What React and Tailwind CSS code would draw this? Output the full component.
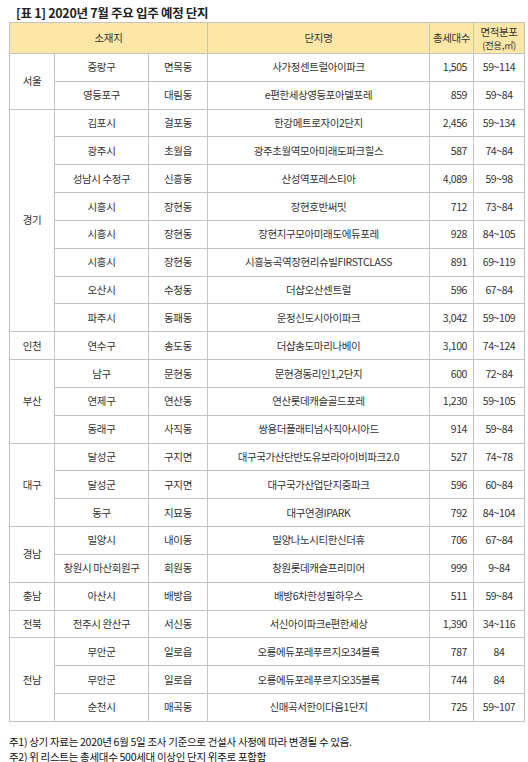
const groups = [
  {
    region: "서울",
    rows: [
      ["중랑구", "면목동", "사가정센트럴아이파크", "1,505", "59~114"],
      ["영등포구", "대림동", "e편한세상영등포아델포레", "859", "59~84"],
    ],
  },
  {
    region: "경기",
    rows: [
      ["김포시", "걸포동", "한강메트로자이2단지", "2,456", "59~134"],
      ["광주시", "초월읍", "광주초월역모아미래도파크힐스", "587", "74~84"],
      ["성남시 수정구", "신흥동", "산성역포레스티아", "4,089", "59~98"],
      ["시흥시", "장현동", "장현호반써밋", "712", "73~84"],
      ["시흥시", "장현동", "장현지구모아미래도에듀포레", "928", "84~105"],
      ["시흥시", "장현동", "시흥능곡역장현리슈빌FIRSTCLASS", "891", "69~119"],
      ["오산시", "수청동", "더샵오산센트럴", "596", "67~84"],
      ["파주시", "동패동", "운정신도시아이파크", "3,042", "59~109"],
    ],
  },
  {
    region: "인천",
    rows: [["연수구", "송도동", "더샵송도마리나베이", "3,100", "74~124"]],
  },
  {
    region: "부산",
    rows: [
      ["남구", "문현동", "문현경동리인1,2단지", "600", "72~84"],
      ["연제구", "연산동", "연산롯데캐슬골드포레", "1,230", "59~105"],
      ["동래구", "사직동", "쌍용더플래티넘사직아시아드", "914", "59~84"],
    ],
  },
  {
    region: "대구",
    rows: [
      ["달성군", "구지면", "대구국가산단반도유보라아이비파크2.0", "527", "74~78"],
      ["달성군", "구지면", "대구국가산업단지중파크", "596", "60~84"],
      ["동구", "지묘동", "대구연경IPARK", "792", "84~104"],
    ],
  },
  {
    region: "경남",
    rows: [
      ["밀양시", "내이동", "밀양나노시티한신더휴", "706", "67~84"],
      ["창원시 마산회원구", "회원동", "창원롯데캐슬프리미어", "999", "9~84"],
    ],
  },
  {
    region: "충남",
    rows: [["아산시", "배방읍", "배방6차한성필하우스", "511", "59~84"]],
  },
  {
    region: "전북",
    rows: [["전주시 완산구", "서신동", "서신아이파크e편한세상", "1,390", "34~116"]],
  },
  {
    region: "전남",
    rows: [
      ["무안군", "일로읍", "오룡에듀포레푸르지오34블록", "787", "84"],
      ["무안군", "일로읍", "오룡에듀포레푸르지오35블록", "744", "84"],
      ["순천시", "매곡동", "신매곡서한이다음1단지", "725", "59~107"],
    ],
  },
];

const cell = "border border-[#c3c3c3] text-center align-middle";

export default function App() {
  return (
    <div
      className="w-[528px] h-[762px] overflow-hidden bg-white text-[#333] pt-[6px]"
      style={{ fontFamily: '"Noto Sans CJK KR", "Noto Sans", sans-serif' }}
    >
      <h1 className="pl-[16px] text-[12.5px] font-bold leading-[14px] text-[#222] tracking-[-0.3px]">
        [표 1] 2020년 7월 주요 입주 예정 단지
      </h1>

      <table className="ml-[9px] mt-[2px] w-[515px] table-fixed border-collapse text-[10.5px] leading-[12px] tracking-[-0.4px]">
        <colgroup>
          <col className="w-[45px]" />
          <col className="w-[94px]" />
          <col className="w-[59px]" />
          <col className="w-[222px]" />
          <col className="w-[44px]" />
          <col className="w-[51px]" />
        </colgroup>
        <thead>
          <tr className="h-[31px] bg-[#fce7a6]">
            <th colSpan={3} className={`${cell} font-normal`}>소재지</th>
            <th className={`${cell} font-normal`}>단지명</th>
            <th className={`${cell} font-normal`}>총세대수</th>
            <th className={`${cell} font-normal leading-[13px]`}>
              면적분포
              <br />
              <span className="text-[9.5px]">(전용,㎡)</span>
            </th>
          </tr>
        </thead>
        <tbody>
          {groups.map((g) =>
            g.rows.map((r, i) => (
              <tr key={g.region + i} className="h-[27.83px]">
                {i === 0 && (
                  <td rowSpan={g.rows.length} className={cell}>
                    {g.region}
                  </td>
                )}
                <td className={cell}>{r[0]}</td>
                <td className={cell}>{r[1]}</td>
                <td className={`${cell} whitespace-nowrap`}>{r[2]}</td>
                <td className="border border-[#c3c3c3] text-right pr-[6px] align-middle">{r[3]}</td>
                <td className={cell}>{r[4]}</td>
              </tr>
            ))
          )}
        </tbody>
      </table>

      <div className="mt-[12px] pl-[9px] text-[10.5px] leading-[15px] text-[#111] tracking-[-0.3px]">
        <p>주1) 상기 자료는 2020년 6월 5일 조사 기준으로 건설사 사정에 따라 변경될 수 있음.</p>
        <p>주2) 위 리스트는 총세대수 500세대 이상인 단지 위주로 포함함</p>
      </div>
    </div>
  );
}
